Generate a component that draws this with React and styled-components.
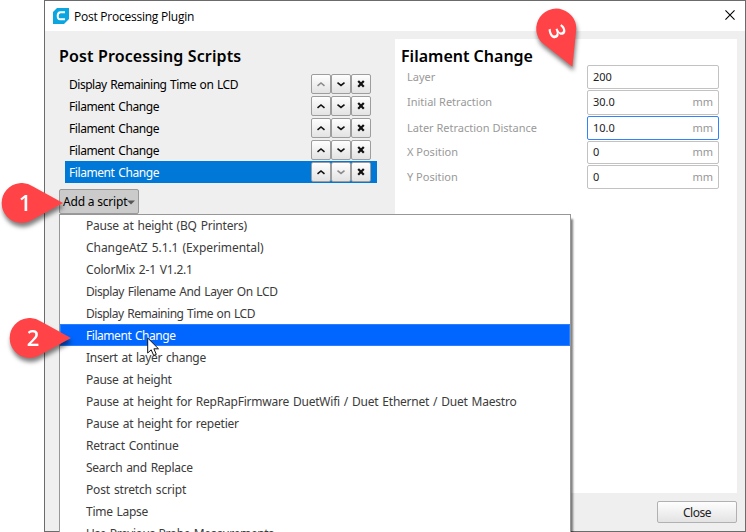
import React from "react";
import styled, { createGlobalStyle, css } from "styled-components";

const Global = createGlobalStyle`
  * { box-sizing: border-box; }
  body { margin: 0; background: #fff; overflow: hidden; font-family: "Noto Sans", sans-serif; font-size: 12px; color: #000; }
`;

const Stage = styled.div`
  position: relative;
  width: 746px;
  height: 532px;
  overflow: hidden;
  padding-left: 44px;
`;

const Dialog = styled.div`
  display: flex;
  flex-direction: column;
  height: 532px;
  border: 1px solid #6b6b6b;
  background: #efefef;
`;

const TitleBar = styled.header`
  display: flex;
  align-items: center;
  height: 30px;
  padding: 0 10px 0 8px;
  background: #fff;
  font-family: "Open Sans", sans-serif;
`;

const CloseIcon = styled.svg`
  margin-bottom: 2px;
`;

const Title = styled.span`
  margin-left: 5px;
  flex: 1;
  letter-spacing: -0.24px;
`;

const Body = styled.main`
  display: flex;
  justify-content: space-between;
  height: 462px;
  padding: 8px 8px 0 14px;
`;

const ScriptsPane = styled.section`
  width: 318px;
  display: flex;
  flex-direction: column;
  align-items: flex-start;
`;

const Heading = styled.h2`
  margin: 0;
  height: 34px;
  line-height: 35px;
  font-size: 16px;
  font-weight: 600;
  letter-spacing: ${(p) => p.$spacing || "0"};
  white-space: nowrap;
`;

const ScriptList = styled.ul`
  list-style: none;
  margin: 0 0 6px 6px;
  padding: 0;
  width: 312px;
`;

const ScriptRow = styled.li`
  display: flex;
  align-items: center;
  height: 22px;
  padding: 0 6px 0 4px;
  background: ${(p) => (p.$selected ? "#0078d7" : "transparent")};
  color: ${(p) => (p.$selected ? "#fff" : "#000")};
`;

const ScriptName = styled.span`
  flex: 1;
  height: 22px;
  line-height: 24px;
  white-space: nowrap;
  word-spacing: 1px;
  letter-spacing: ${(p) => p.$spacing}px;
`;

const raised = css`
  border: 1px solid #9d9d9d;
  border-radius: 2px;
  background: linear-gradient(#fefefe, #e3e3e3);
`;

const IconButton = styled.button`
  ${raised}
  display: flex;
  align-items: center;
  justify-content: center;
  width: 20px;
  height: 20px;
  padding: 0;
  color: ${(p) => (p.$dim ? "#8b8b8b" : "#111")};
`;

const AddButton = styled.button`
  display: flex;
  align-items: center;
  width: 80px;
  height: 25px;
  padding: 0 3px 1px;
  border: 1px solid #9a9a9a;
  border-radius: 2px;
  background: #cbcbcb;
  font: inherit;
  letter-spacing: -0.2px;
  white-space: nowrap;

  svg { flex: none; margin-top: 2px; }
`;

const SettingsPane = styled.section`
  width: 342px;
  height: 454px;
  padding: 0 18px 0 6px;
  background: #fff;
`;

const SettingsTitle = styled(Heading)`
  height: 26px;
`;

const SettingRow = styled.label`
  display: flex;
  justify-content: space-between;
  height: ${(p) => p.$height}px;
  margin-bottom: 1px;
  padding-left: 6px;
`;

const SettingName = styled.span`
  line-height: ${(p) => p.$line}px;
  font-size: 11px;
  color: #999;
`;

const Field = styled.span`
  display: flex;
  justify-content: space-between;
  width: 132px;
  padding: 0 5px;
  border: 1px solid ${(p) => (p.$focused ? "#3282ff" : "#c2c2c2")};
  border-radius: 2px;
  font-size: 11px;
  line-height: ${(p) => p.$line - 2}px;
  color: #222;
  background: #fff;
`;

const Unit = styled.span`
  color: #969696;
`;

const Footer = styled.footer`
  display: flex;
  justify-content: flex-end;
  padding: 8px 8px 0 0;
`;

const CloseButton = styled.button`
  ${raised}
  width: 80px;
  height: 22px;
  padding: 0;
  font: inherit;
  line-height: 21px;
  letter-spacing: -0.5px;
  color: #222;
  border-color: #b1b1b1;
`;

const Menu = styled.ul`
  position: absolute;
  left: 59px;
  top: 214px;
  width: 512px;
  height: 330px;
  margin: 0;
  padding: 0;
  list-style: none;
  background: #fff;
  border: 1px solid #979797;
  box-shadow: 3px 4px 2px -1px rgba(0, 0, 0, 0.5);
`;

const MenuItem = styled.li`
  height: 22px;
  line-height: 24px;
  padding-left: 26px;
  white-space: nowrap;
  word-spacing: 1px;
  letter-spacing: ${(p) => p.$spacing}px;
  color: ${(p) => (p.$active ? "#fff" : "#3b3b3b")};
  background: ${(p) => (p.$active ? "#0066ff" : "transparent")};
  box-shadow: ${(p) => (p.$active ? "inset 0 0 0 1px #2b7fff" : "none")};
  &:first-child { margin-top: -1px; }
`;

const PinMark = styled.svg`
  position: absolute;
  left: ${(p) => p.$x - 26}px;
  top: ${(p) => p.$y - 26}px;
  overflow: visible;
  filter: drop-shadow(1px 4px 2px rgba(0, 0, 0, 0.5));
`;

const Cursor = styled.svg`
  position: absolute;
  left: 147px;
  top: 337px;
`;

function Pin({ n, x, y, angle = 0 }) {
  return (
    <PinMark $x={x} $y={y} width="72" height="72" viewBox="-26 -26 72 72">
      <g transform={`rotate(${angle})`}>
        <path d="M42 0 L12 -16.5 A20 20 0 1 0 12 16.5 Z" fill="#ff4347" />
        <text x="4" y="8" textAnchor="middle" fontFamily="Open Sans" fontSize="22" fontWeight="600" fill="#fff">{n}</text>
      </g>
    </PinMark>
  );
}

const Logo = () => (
  <svg width="16" height="16" viewBox="0 0 16 16">
    <path d="M4 0H16V11L11 16H0V4Z" fill="#0ba6e0" />
    <path d="M12 4.3H7.5Q4.7 4.3 4.7 8T7.5 11.2H12" fill="none" stroke="#fff" strokeWidth="2" />
  </svg>
);

const glyphs = {
  up: <path d="M1.5 6.8 5 4 8.5 6.8" strokeWidth="1.6" />,
  down: <path d="M1.5 3.6 5 6.4 8.5 3.6" strokeWidth="1.6" />,
  remove: <path d="M2.2 2 7.8 7.8M7.8 2 2.2 7.8" strokeWidth="2.2" />,
};

const Glyph = ({ kind }) => (
  <svg width="10" height="10" viewBox="0 0 10 10" fill="none" stroke="currentColor">{glyphs[kind]}</svg>
);

const scripts = [
  ["Display Remaining Time on LCD", -0.48],
  ["Filament Change", -0.42],
  ["Filament Change", -0.42],
  ["Filament Change", -0.42],
  ["Filament Change", -0.42],
];

const settings = [
  ["Layer", "200", "", 24, 24],
  ["Initial Retraction", "30.0", "mm", 25, 24],
  ["Later Retraction Distance", "10.0", "mm", 24, 24],
  ["X Position", "0", "mm", 23, 22],
  ["Y Position", "0", "mm", 24, 23],
];

const menu = [
  ["Pause at height (BQ Printers)", -0.2],
  ["ChangeAtZ 5.1.1 (Experimental)", -0.06],
  ["ColorMix 2-1 V1.2.1", -0.2],
  ["Display Filename And Layer On LCD", -0.42],
  ["Display Remaining Time on LCD", -0.48],
  ["Filament Change", -0.45],
  ["Insert at layer change", -0.27],
  ["Pause at height", -0.27],
  ["Pause at height for RepRapFirmware DuetWifi / Duet Ethernet / Duet Maestro", -0.22],
  ["Pause at height for repetier", -0.22],
  ["Retract Continue", -0.19],
  ["Search and Replace", -0.28],
  ["Post stretch script", -0.16],
  ["Time Lapse", -0.27],
  ["Use Previous Probe Measurements", -0.39],
];

export default function App() {
  return (
    <Stage>
      <Global />
      <Dialog>
        <TitleBar>
          <Logo />
          <Title>Post Processing Plugin</Title>
          <CloseIcon width="10" height="10" viewBox="0 0 11 11" stroke="#000" strokeWidth="1.2">
            <path d="M0.5 0.5 10.5 10.5M10.5 0.5 0.5 10.5" />
          </CloseIcon>
        </TitleBar>
        <Body>
          <ScriptsPane>
            <Heading $spacing="0.13px">Post Processing Scripts</Heading>
            <ScriptList>
              {scripts.map(([name, spacing], i) => (
                <ScriptRow key={i} $selected={i === 4}>
                  <ScriptName $spacing={spacing}>{name}</ScriptName>
                  <IconButton $dim={i === 0}><Glyph kind="up" /></IconButton>
                  <IconButton $dim={i === 4}><Glyph kind="down" /></IconButton>
                  <IconButton><Glyph kind="remove" /></IconButton>
                </ScriptRow>
              ))}
            </ScriptList>
            <AddButton>
              Add a script
              <svg width="8" height="5" viewBox="0 0 8 5"><path d="M0 0.5H8L4 4.5Z" fill="#555" /></svg>
            </AddButton>
          </ScriptsPane>
          <SettingsPane>
            <SettingsTitle>Filament Change</SettingsTitle>
            {settings.map(([name, value, unit, height, line], i) => (
              <SettingRow key={name} $height={height}>
                <SettingName $line={line}>{name}</SettingName>
                <Field $line={line} $focused={i === 2}>{value}<Unit>{unit}</Unit></Field>
              </SettingRow>
            ))}
          </SettingsPane>
        </Body>
        <Footer><CloseButton>Close</CloseButton></Footer>
      </Dialog>
      <Menu>
        {menu.map(([name, spacing], i) => (
          <MenuItem key={name} $active={i === 5} $spacing={spacing}>{name}</MenuItem>
        ))}
      </Menu>
      <Pin n="1" x={21} y={203} />
      <Pin n="2" x={29} y={338} />
      <Pin n="3" x={555.5} y={27.5} angle={67} />
      <Cursor width="13" height="20" viewBox="0 0 13 20">
        <path d="M0.7 1V16L4.2 12.8 6.7 18.5 9.3 17.4 6.9 11.8H11.5Z" fill="#fff" stroke="#111" strokeWidth="1" />
      </Cursor>
    </Stage>
  );
}
